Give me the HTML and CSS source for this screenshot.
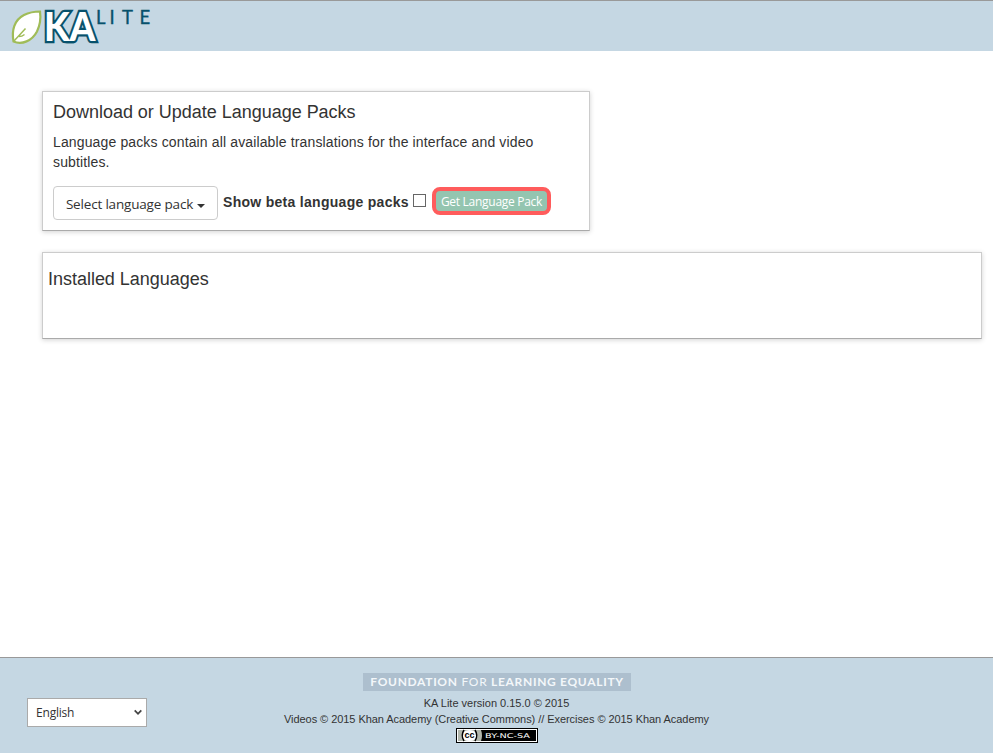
FILE: index.html
```html
<!DOCTYPE html>
<html lang="en">
<head>
<meta charset="utf-8">
<title>KA Lite</title>
<link rel="stylesheet" href="styles.css">
</head>
<body>
<div class="page">
  <header class="topbar">
    <svg class="logo" width="160" height="49" viewBox="0 1 160 49" role="img" aria-label="KA Lite">
      <path class="leaf" d="M13.500 41.500C11.500 31 14 20 24 15Q31 11.500 40 11.500Q41.500 22 37 31.500C32 41 22 45 13.500 41.500Z"/>
      <path class="vein" d="M14 41L25.500 28.500M19 36.500Q22 36.500 24.500 34.500"/>
      <text class="ka" x="44" y="41" textLength="51.500" lengthAdjust="spacingAndGlyphs">KA</text>
      <text class="lite" x="96 109.500 122 139.500" y="23.500">LITE</text>
    </svg>
  </header>
  <main class="content">
    <section class="card download">
      <h1 class="title">Download or Update Language Packs</h1>
      <p class="intro">Language packs contain all available translations for the interface and video<br>subtitles.</p>
      <div class="controls">
        <button class="dropdown"><span>Select language pack</span><i class="caret"></i></button>
        <label class="beta"><span>Show beta language packs</span><i class="box"></i></label>
        <button class="get"><span>Get Language Pack</span></button>
      </div>
    </section>
    <section class="card installed">
      <h2 class="title">Installed Languages</h2>
    </section>
  </main>
  <footer class="footer">
    <div class="language"><span>English</span>
      <svg width="8" height="7" viewBox="0 0 8 7"><path d="M.7 1.300L4 4.800L7.300 1.300"/></svg>
    </div>
    <div class="credits">
      <div class="foundation"><b>FOUNDATION</b> <span>FOR</span> <b>LEARNING EQUALITY</b></div>
      <div class="line version">KA Lite version 0.15.0 © 2015</div>
      <div class="line rights">Videos © 2015 Khan Academy (Creative Commons) // Exercises © 2015 Khan Academy</div>
      <svg class="license" width="82" height="15" viewBox="0 0 82 15">
        <rect width="82" height="15" fill="#000"/>
        <rect x="1" y="1" width="80" height="13" fill="#fff"/>
        <rect x="2" y="2" width="78" height="11" fill="#000"/>
        <path d="M2 2H25Q27 7.500 25 13H2Z" fill="#b2b7ad"/>
        <ellipse cx="13.500" cy="7.500" rx="7.500" ry="5.500" fill="#fff"/>
        <path d="M8 2Q4.500 7.500 8 13M19 2Q22.500 7.500 19 13" fill="none" stroke="#000" stroke-width="1.500"/>
        <text class="cc" x="8.500" y="10" textLength="10">cc</text>
        <text class="by" x="29" y="10" textLength="45" lengthAdjust="spacingAndGlyphs">BY-NC-SA</text>
      </svg>
    </div>
  </footer>
</div>
</body>
</html>
```
FILE: styles.css
```css
* { box-sizing: border-box; }
body { margin: 0; background: #fff; color: #333; font-family: "Liberation Sans", Arial, sans-serif; }
.page { width: 993px; height: 753px; display: flex; flex-direction: column; }
.topbar { height: 51px; background: #c5d7e3; border-top: 1px solid #999; }
.logo { display: block; }
.leaf { fill: #fff; stroke: #a0bc58; stroke-width: 2.2; }
.vein { fill: none; stroke: #a0bc58; stroke-width: 1.5; }
.ka { font: 900 40px Lato, sans-serif; fill: #fff; stroke: #07516c; stroke-width: 4.500px; paint-order: stroke; }
.lite { font: 18.500px Lato, sans-serif; fill: #07516c; stroke: #07516c; stroke-width: .35px; }
.content { flex: 1; padding: 40px 11px 0 42px; }
.card { border: 1px solid #ccc; border-bottom-color: #aaa; box-shadow: 0 1px 5px rgba(0, 0, 0, .18); background: #fff; }
.download { width: 548px; height: 140px; padding: 10px; }
.installed { width: 940px; height: 87px; margin-top: 21px; padding: 16px 5px; }
.title { margin: 0; font-size: 18px; line-height: 20px; font-weight: 400; white-space: nowrap; letter-spacing: -.02px; }
.intro { margin: 10px 0 0; font-size: 14px; line-height: 20px; white-space: nowrap; letter-spacing: .135px; }
.controls { display: flex; align-items: center; height: 34px; margin-top: 14px; }
button { font-family: "Open Sans", sans-serif; padding: 0; }
.dropdown { width: 165px; height: 34px; flex: none; display: flex; align-items: center; justify-content: center; gap: 4px; border: 1px solid #ccc; border-radius: 4px; background: #fff; color: #333; font-size: 13.500px; letter-spacing: -.18px; white-space: nowrap; padding-top: 2px; }
.caret { border: 4px solid transparent; border-top-color: #333; border-bottom: 0; margin-top: 3px; }
.beta { width: 203px; margin: -3px 0 0 5px; display: flex; align-items: center; justify-content: space-between; font-size: 14px; font-weight: 700; letter-spacing: .29px; white-space: nowrap; }
.box { width: 13px; height: 13px; flex: none; border: 1px solid #666; background: #fff; margin-top: -3px; }
.get { width: 119px; height: 28px; margin: -4px 0 0 6px; border: 4px solid #ff5c5c; border-radius: 8px; background: #94c5b0; color: #fff; font-size: 12px; letter-spacing: -.28px; white-space: nowrap; }
.footer { height: 96px; position: relative; background: #c5d7e3; border-top: 1px solid #999; }
.language { position: absolute; left: 27px; top: 40px; width: 120px; height: 29px; padding: 0 4px 0 8px; border: 1px solid #aaa; background: #fff; display: flex; align-items: center; justify-content: space-between; font: 12px "Open Sans", sans-serif; letter-spacing: -.2px; }
.language path { fill: none; stroke: #444; stroke-width: 1.8; }
.credits { display: flex; flex-direction: column; align-items: center; padding-top: 15px; }
.foundation { width: 268px; height: 18px; margin-left: 1px; background: #adbfce; color: #f3f7fa; text-align: center; font: 12px/18px Lato, sans-serif; letter-spacing: .68px; white-space: nowrap; }
.line { font-size: 11px; line-height: 16px; white-space: nowrap; }
.version { margin-top: 4px; }
.rights { letter-spacing: -.055px; }
.license { display: block; margin: 1px 0 0 1px; }
.cc { font: bold 9px "Liberation Sans", sans-serif; fill: #000; }
.by { font: 6.500px "DejaVu Sans", sans-serif; fill: #fff; }
```
